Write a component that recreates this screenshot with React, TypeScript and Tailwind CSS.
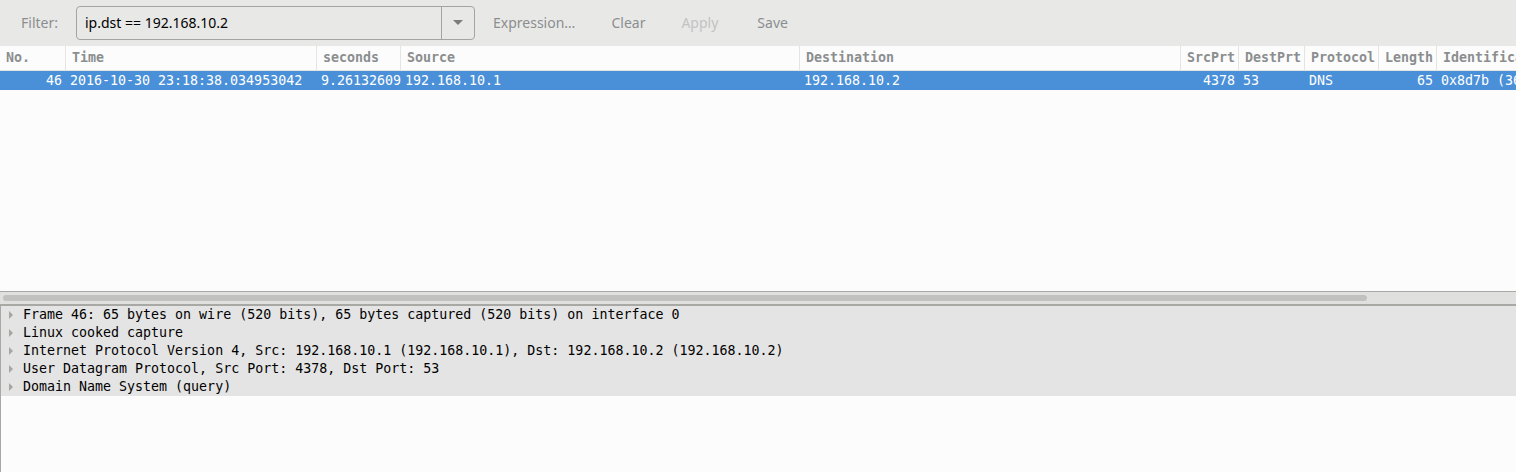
import { type ReactNode } from 'react';

type Col = { key: string; title: string; width: string; right?: boolean };

const COLS: Col[] = [
  { key: 'no', title: 'No.', width: 'w-[66px]', right: true },
  { key: 'time', title: 'Time', width: 'w-[251px]' },
  { key: 'sec', title: 'seconds', width: 'w-[84px]' },
  { key: 'src', title: 'Source', width: 'w-[399px]' },
  { key: 'dst', title: 'Destination', width: 'w-[381px]' },
  { key: 'sport', title: 'SrcPrt', width: 'w-[58px]', right: true },
  { key: 'dport', title: 'DestPrt', width: 'w-[66px]' },
  { key: 'proto', title: 'Protocol', width: 'w-[74px]' },
  { key: 'len', title: 'Length', width: 'w-[58px]', right: true },
  { key: 'id', title: 'Identification', width: 'w-[200px]' },
];

const ROW: Record<string, string> = {
  no: '46',
  time: '2016-10-30 23:18:38.034953042',
  sec: '9.261326093',
  src: '192.168.10.1',
  dst: '192.168.10.2',
  sport: '4378',
  dport: '53',
  proto: 'DNS',
  len: '65',
  id: '0x8d7b (36219)',
};

const DETAILS = [
  'Frame 46: 65 bytes on wire (520 bits), 65 bytes captured (520 bits) on interface 0',
  'Linux cooked capture',
  'Internet Protocol Version 4, Src: 192.168.10.1 (192.168.10.1), Dst: 192.168.10.2 (192.168.10.2)',
  'User Datagram Protocol, Src Port: 4378, Dst Port: 53',
  'Domain Name System (query)',
];

const mono = "font-['DejaVu_Sans_Mono',monospace] text-[13.3px]";

function ToolButton({ children, disabled }: { children: ReactNode; disabled?: boolean }) {
  return (
    <span className={`px-[18px] ${disabled ? 'text-[#c2c3c3]' : 'text-[#8b8e8f]'}`}>{children}</span>
  );
}

export default function App() {
  return (
    <div className="flex h-[472px] w-[1516px] flex-col overflow-hidden bg-[#fcfcfc] font-['Noto_Sans',sans-serif]">
      {/* filter toolbar */}
      <div className="flex h-[46px] shrink-0 items-center bg-[#e8e8e7] pb-[1px] text-[14px]">
        <span className="ml-[21px] w-[55px] text-[#8b8e8f]">Filter:</span>
        <div className="flex h-[34px] w-[399px] rounded-[4px] border border-[#a4a5a3]">
          <div className="flex flex-1 items-center pl-[8px] text-black">ip.dst == 192.168.10.2</div>
          <div className="flex w-[33px] items-center justify-center border-l border-[#a4a5a3]">
            <svg width="10" height="6" viewBox="0 0 10 6">
              <path d="M0 0 L10 0 L5 5 Z" fill="#7b7d7d" />
            </svg>
          </div>
        </div>
        <div className="flex">
          <ToolButton>Expression…</ToolButton>
          <ToolButton>Clear</ToolButton>
          <ToolButton disabled>Apply</ToolButton>
          <span className="w-[21px]" />
          <span className="text-[#8b8e8f]">Save</span>
        </div>
      </div>

      {/* packet list header */}
      <div className={`flex h-[25px] shrink-0 border-b border-[#e4e4e3] bg-[#fcfcfc] font-bold text-[#8b8e8f] ${mono}`}>
        {COLS.map((c) => (
          <div
            key={c.key}
            className={`${c.width} flex shrink-0 items-center overflow-hidden whitespace-nowrap border-r border-[#e4e4e3] pl-[6px]`}
          >
            {c.title}
          </div>
        ))}
      </div>

      {/* selected packet row */}
      <div className={`flex h-[19px] shrink-0 bg-[#4a90d9] text-white ${mono}`}>
        {COLS.map((c) => (
          <div
            key={c.key}
            className={`${c.width} flex shrink-0 items-center overflow-hidden whitespace-nowrap px-[4px] ${c.right ? 'justify-end' : ''}`}
          >
            {ROW[c.key]}
          </div>
        ))}
      </div>

      <div className="flex-1" />

      {/* horizontal scrollbar */}
      <div className="flex h-[15px] shrink-0 items-center border-t border-b-2 border-[#a8a8a5] bg-[#e0e0de] pl-[3px]">
        <div className="h-[6px] w-[1364px] rounded-full bg-[#c1c2bf]" />
      </div>

      {/* packet details */}
      <div className={`h-[166px] shrink-0 border-l border-[#a8a8a5] text-black ${mono}`}>
        <ul className="bg-[#e4e4e4]">
          {DETAILS.map((d) => (
            <li key={d} className="flex h-[18px] items-center whitespace-nowrap">
              <svg className="ml-[8px] mr-[10px]" width="4" height="8" viewBox="0 0 4 8">
                <path d="M0 0 L4 4 L0 8 Z" fill="#a5a6a4" />
              </svg>
              {d}
            </li>
          ))}
        </ul>
      </div>
    </div>
  );
}
